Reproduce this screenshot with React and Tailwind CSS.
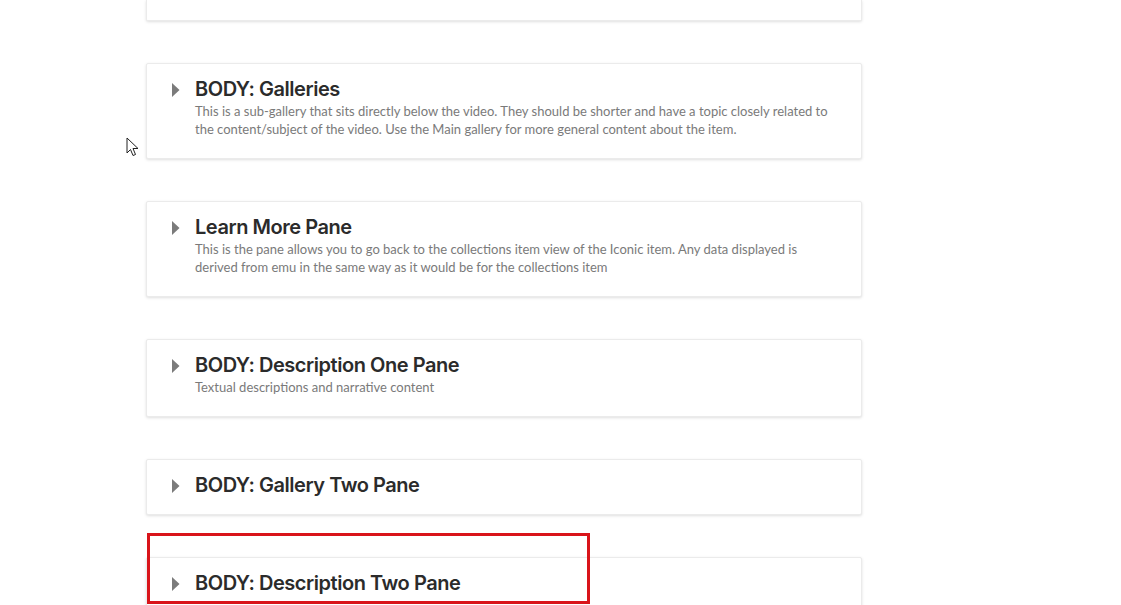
import React from "react";

const panes = [
  {
    title: "BODY: Galleries",
    lines: [
      "This is a sub-gallery that sits directly below the video. They should be shorter and have a topic closely related to",
      "the content/subject of the video. Use the Main gallery for more general content about the item.",
    ],
  },
  {
    title: "Learn More Pane",
    lines: [
      "This is the pane allows you to go back to the collections item view of the Iconic item. Any data displayed is",
      "derived from emu in the same way as it would be for the collections item",
    ],
  },
  {
    title: "BODY: Description One Pane",
    lines: ["Textual descriptions and narrative content"],
  },
  { title: "BODY: Gallery Two Pane", lines: [] },
  { title: "BODY: Description Two Pane", lines: [] },
];

function Caret() {
  return (
    <svg width="9" height="14" viewBox="0 0 9 14" className="mt-[6px] shrink-0">
      <path d="M1 0 L8.5 7 L1 14 Z" fill="#7b7b7b" />
    </svg>
  );
}

function Pane({ title, lines }) {
  return (
    <div className="bg-white border border-[#ebebeb] rounded-[2px] shadow-[0_1px_3px_rgba(0,0,0,0.13)] pl-[24px] pr-6 pt-[13px] pb-[17px] flex gap-[15px]">
      <Caret />
      <div>
        <h2 className="text-[20px] leading-[24px] font-semibold text-[#2b2b2b] tracking-[-0.45px]">{title}</h2>
        {lines.length > 0 && (
          <div
            className="text-[13px] leading-[18px] text-[#7a7a7a] mt-px mb-[3px] whitespace-nowrap"
            style={{ fontFamily: "Lato, 'Noto Sans', sans-serif" }}
          >
            {lines.map((l) => (
              <div key={l}>{l}</div>
            ))}
          </div>
        )}
      </div>
    </div>
  );
}

export default function App() {
  return (
    <div
      className="relative w-[1121px] h-[605px] bg-white overflow-hidden"
      style={{ fontFamily: "Inter, 'Noto Sans', sans-serif" }}
    >
      <div className="ml-[146px] w-[716px] flex flex-col gap-[42px]">
        <div className="h-[21px] bg-white border border-t-0 border-[#ebebeb] rounded-b-[2px] shadow-[0_1px_3px_rgba(0,0,0,0.13)]" />
        {panes.map((p) => (
          <Pane key={p.title} {...p} />
        ))}
      </div>

      {/* annotation box */}
      <div className="absolute left-[147px] top-[533px] w-[443px] h-[71px] border-[3px] border-[#d9141a]" />

      {/* mouse cursor */}
      <svg className="absolute left-[126px] top-[137px]" width="13" height="20" viewBox="0 0 13 20">
        <path
          d="M1 1 L1 16 L4.5 12.5 L7 18.5 L9.5 17.5 L7 11.5 L12 11.5 Z"
          fill="white"
          stroke="#222"
          strokeWidth="1"
          strokeLinejoin="miter"
        />
      </svg>
    </div>
  );
}
